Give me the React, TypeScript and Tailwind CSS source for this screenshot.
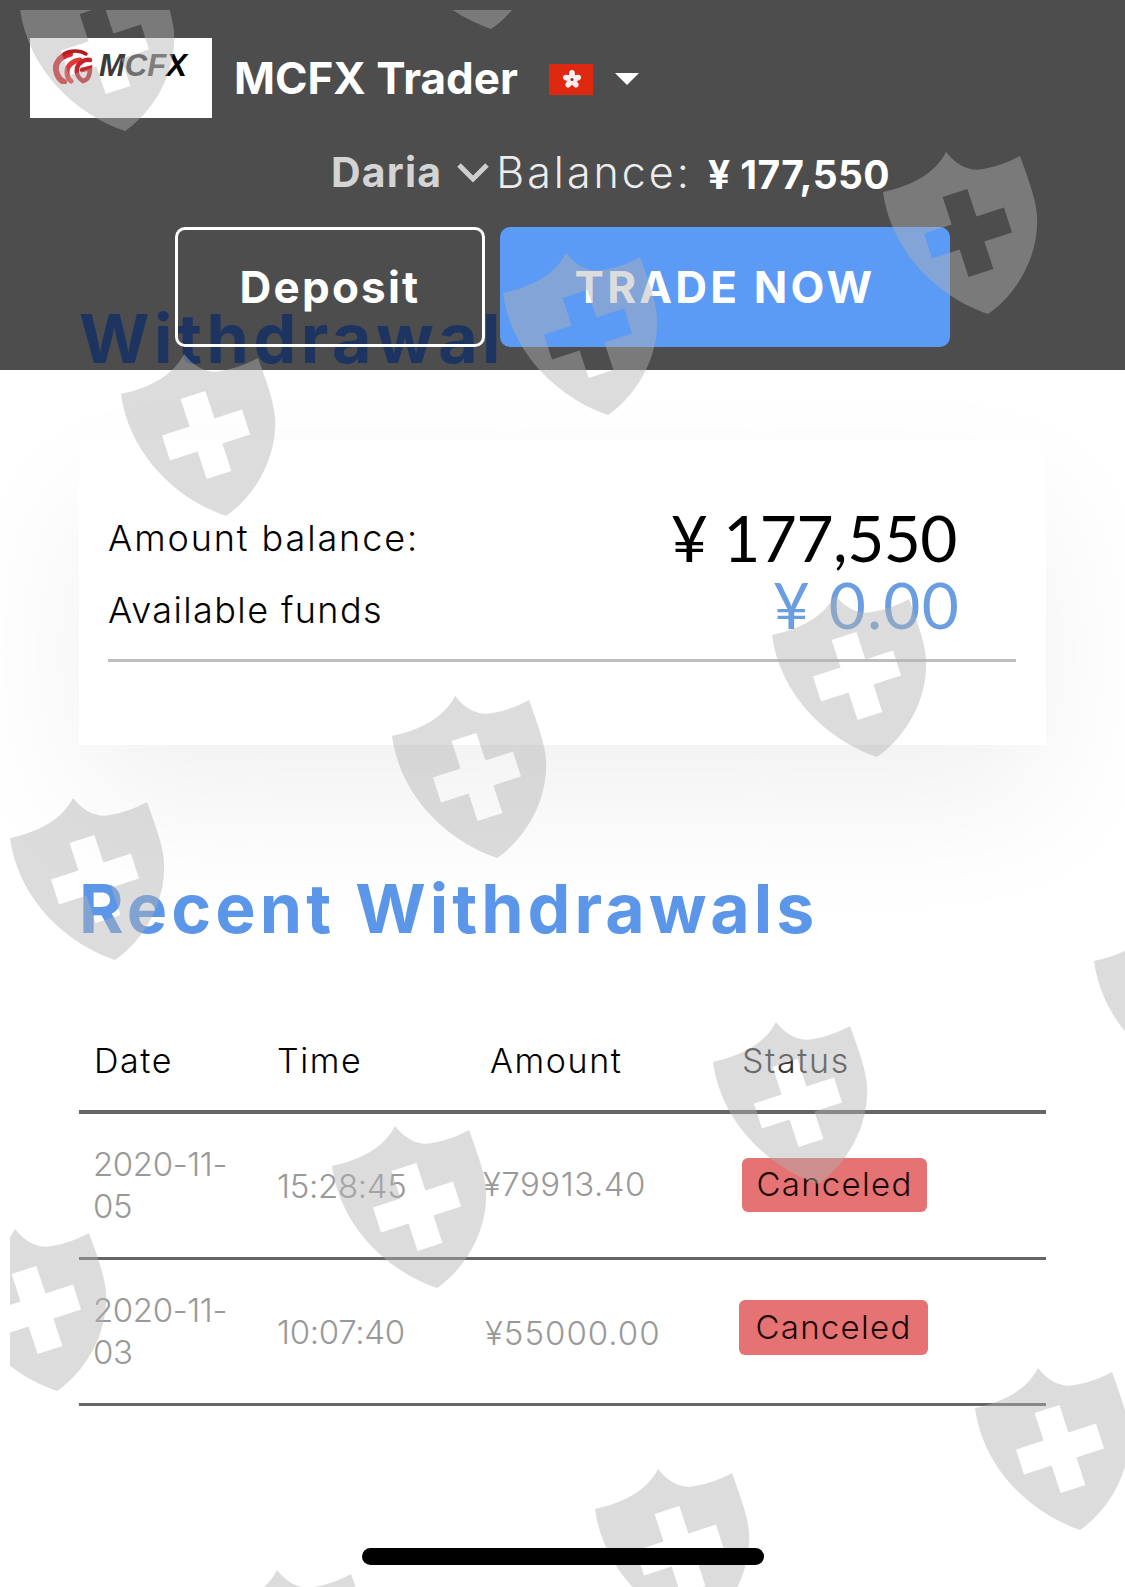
const SHIELDS: Array<[number, number]> = [
  [20, -31],
  [386, -133],
  [883, 152],
  [503, 253],
  [121, 354],
  [772, 595],
  [392, 696],
  [10, 798],
  [1094, 921],
  [713, 1022],
  [332, 1126],
  [-48, 1229],
  [975, 1368],
  [595, 1469],
  [214, 1570],
];

const SHIELD_PATH =
  "M0 40C28 34 52 22 63 0C74 14 88 20 100 17C113 15 126 10 137 4C147 32 156 55 154 75C152 112 130 145 105 162C55 145 8 100 0 40Z" +
  "M59.6 45L84.4 37L93.4 64.6L121 55.6L129 80.4L101.4 89.4L110.4 117L85.6 125L76.6 97.4L49 106.4L41 81.6L68.6 72.6Z";

function Watermark() {
  return (
    <svg
      className="absolute left-[10px] top-[10px] z-10 pointer-events-none"
      width="1115"
      height="1577"
      viewBox="10 10 1115 1577"
    >
      {SHIELDS.map(([x, y]) => (
        <path
          key={`${x}-${y}`}
          d={SHIELD_PATH}
          transform={`translate(${x} ${y})`}
          fill="#b2b2b2"
          fillOpacity="0.45"
          fillRule="evenodd"
        />
      ))}
    </svg>
  );
}

function Logo() {
  return (
    <div className="w-[182px] h-[80px] bg-white flex items-start pl-[23px] pt-[11px] gap-[6px] shrink-0">
      <svg width="40" height="35" viewBox="0 0 40 35" fill="none" strokeLinecap="round">
        <path d="M17 5C7 7 2 14 3 21C4 27 7 31 11 33" stroke="#d8262c" strokeWidth="6" />
        <path d="M11 5C17 1 27 1 33 5" stroke="#b51d22" strokeWidth="3.5" />
        <path d="M27 11C19 12 14 17 14 23C14 27 15 30 18 32" stroke="#e0393b" strokeWidth="5" />
        <path d="M37 11C32 10 26 13 24 19C23 24 25 29 30 32C35 31 37 26 37 19L29 21" stroke="#c5242a" strokeWidth="4.5" />
      </svg>
      <span className="font-['Liberation_Sans',sans-serif] italic font-bold text-[31px] leading-[34px] text-[#3a3a3a]">
        MC<span className="text-[#555]">F</span>
        <span className="text-black">X</span>
      </span>
    </div>
  );
}

function HkFlag() {
  return (
    <svg className="ml-[31px] mt-[2px]" width="44" height="31" viewBox="0 0 44 31">
      <rect width="44" height="31" fill="#de2910" />
      <g fill="#fbeeee">
        <ellipse cx="23" cy="10.5" rx="3" ry="4.4" />
        <ellipse cx="23" cy="10.5" rx="3" ry="4.4" transform="rotate(72 23 15.5)" />
        <ellipse cx="23" cy="10.5" rx="3" ry="4.4" transform="rotate(144 23 15.5)" />
        <ellipse cx="23" cy="10.5" rx="3" ry="4.4" transform="rotate(216 23 15.5)" />
        <ellipse cx="23" cy="10.5" rx="3" ry="4.4" transform="rotate(288 23 15.5)" />
      </g>
      <circle cx="23" cy="15.5" r="1.5" fill="#8a2a20" />
    </svg>
  );
}

function Header() {
  return (
    <header className="relative h-[370px] bg-[#4d4d4d] overflow-hidden">
      {/* heading of the page, scrolled up behind the bar */}
      <div className="absolute left-[79px] top-[298px] text-[68px] leading-[80px] font-bold tracking-[4.5px] text-[#1d3461]">
        Withdrawal
      </div>

      <div className="relative pl-[30px] pt-[38px] flex items-center">
        <Logo />
        <span className="ml-[22px] text-[44px] leading-[80px] font-bold text-white">MCFX Trader</span>
        <HkFlag />
        <svg className="ml-[22px] mt-[2px]" width="24" height="12" viewBox="0 0 24 12">
          <path d="M0 0H24L12 12Z" fill="#fff" />
        </svg>
      </div>

      <div className="relative mt-[24px] pl-[331px] flex items-center h-[60px]">
        <span className="text-[41px] font-bold tracking-[1.2px] text-[#d4d4d4] leading-none">Daria</span>
        <svg className="ml-[14px]" width="34" height="22" viewBox="0 0 34 22">
          <path d="M3 4L17 18L31 4" fill="none" stroke="#cfcfcf" strokeWidth="5" />
        </svg>
        <span className="ml-[6px] text-[43px] font-light tracking-[3px] text-[#ececec] leading-none">Balance:</span>
        <span className="ml-[16px] mt-[4px] text-[39px] font-bold text-white leading-none tracking-[0.4px]">¥ 177,550</span>
      </div>

      <div className="relative mt-[25px] pl-[175px] flex gap-[15px]">
        <button className="w-[310px] h-[120px] border-[3px] border-white rounded-[10px] text-[44px] font-bold tracking-[2.2px] text-white">
          Deposit
        </button>
        <button className="w-[450px] h-[120px] bg-[#5b9af5] rounded-[10px] text-[44px] font-bold tracking-[3.2px] text-white">
          TRADE NOW
        </button>
      </div>
    </header>
  );
}

function BalanceCard() {
  return (
    <section className="mt-[70px] h-[305px] bg-white shadow-[0_60px_140px_rgba(0,0,0,0.06)] pl-[29px] pr-[30px] pt-[60px]">
      <div className="flex items-center justify-between h-[76px] pr-[59px]">
        <span className="text-[36px] font-light tracking-[1.9px] text-black">Amount balance:</span>
        <span className="font-['Lato',sans-serif] text-[64px] tracking-[-0.5px] text-black">¥ 177,550</span>
      </div>
      <div className="flex items-center justify-between h-[68px] pr-[56px]">
        <span className="text-[36px] font-light tracking-[1.4px] text-black">Available funds</span>
        <span className="font-['Lato',sans-serif] text-[64px] tracking-[1.2px] text-[#6a9ee0] -mt-[10px]">¥ 0.00</span>
      </div>
      <div className="mt-[15px] h-[3px] bg-[#bdbdbd]" />
    </section>
  );
}

function StatusPill({ className }: { className: string }) {
  return (
    <span className={`flex items-center justify-center bg-[#e57373] rounded-[6px] text-[33px] font-light tracking-[1.3px] text-[#1a0606] ${className}`}>
      Canceled
    </span>
  );
}

type RowProps = { date: string[]; time: string; amount: string; amountClass: string; pill: string };

function WithdrawalRow({ date, time, amount, amountClass, pill }: RowProps) {
  return (
    <div className="grid grid-cols-[198px_213px_252px_1fr] items-center h-[146px] border-b-[3px] border-[#666] text-[33px] font-light text-[#999]">
      <div className="pl-[14px] -mt-[2px] leading-[42px] tracking-[-0.4px]">
        {date[0]}
        <br />
        {date[1]}
      </div>
      <div className="mt-[3px] tracking-[-0.3px]">{time}</div>
      <div className={amountClass}>{amount}</div>
      <StatusPill className={pill} />
    </div>
  );
}

export default function App() {
  return (
    <div className="relative h-[1587px] overflow-hidden bg-white font-['Inter',sans-serif]">
      <Header />
      <main className="px-[79px]">
        <BalanceCard />
        <h2 className="mt-[123px] text-[68px] leading-[80px] font-bold tracking-[4px] text-[#5b96e8]">Recent Withdrawals</h2>

        <div className="mt-[74px] grid grid-cols-[198px_213px_252px_1fr] items-center h-[92px] pb-[12px] border-b-[4px] border-[#666] text-[34px] font-light tracking-[1.6px] text-black">
          <div className="pl-[15px]">Date</div>
          <div>Time</div>
          <div>Amount</div>
          <div className="text-[#333]">Status</div>
        </div>
        <WithdrawalRow
          date={["2020-11-", "05"]}
          time="15:28:45"
          amount="¥79913.40"
          amountClass="-ml-[7px] -mt-[2px] tracking-[0.5px]"
          pill="w-[185px] h-[54px] -mt-[2px]"
        />
        <WithdrawalRow
          date={["2020-11-", "03"]}
          time="10:07:40"
          amount="¥55000.00"
          amountClass="-ml-[5px] mt-[4px] tracking-[1px]"
          pill="w-[189px] h-[55px] -ml-[3px] -mt-[8px]"
        />
      </main>
      <Watermark />
      <div className="absolute z-20 left-[362px] top-[1548px] w-[402px] h-[17px] rounded-full bg-black" />
    </div>
  );
}
